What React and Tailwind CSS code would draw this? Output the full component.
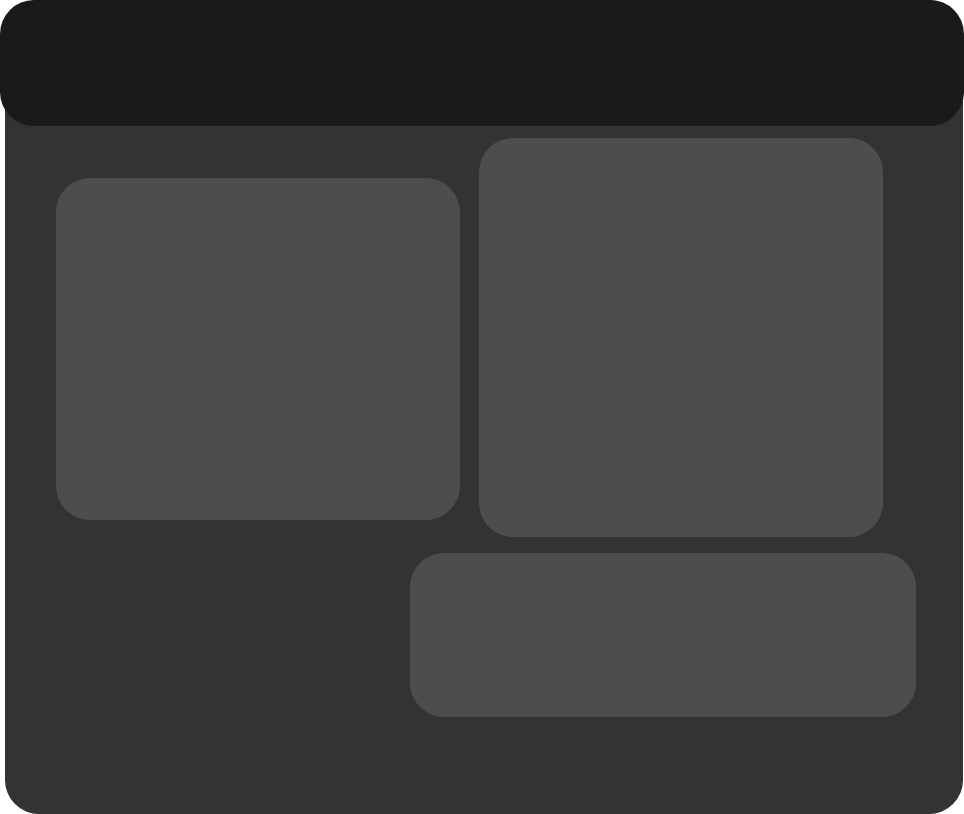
export default function App() {
  return (
    <div className="min-h-screen bg-white">
      <div className="flex min-h-screen flex-col">
        <header className="relative z-10 h-[126px] shrink-0 rounded-[34px] bg-[#1a1a1a]" />
        <main className="-mt-[126px] mr-px ml-[5px] flex grow flex-col gap-4 rounded-[34px] bg-[#333333] pt-[138px] pr-[47px] pb-[97px] pl-[51px]">
          <div className="mr-[33px] flex items-start gap-[19px]">
            <section className="mt-10 h-[342px] flex-1 rounded-[34px] bg-[#4d4d4d]" />
            <section className="h-[399px] flex-1 rounded-[34px] bg-[#4d4d4d]" />
          </div>
          <section className="ml-[354px] h-[164px] rounded-[34px] bg-[#4d4d4d]" />
        </main>
      </div>
    </div>
  );
}
